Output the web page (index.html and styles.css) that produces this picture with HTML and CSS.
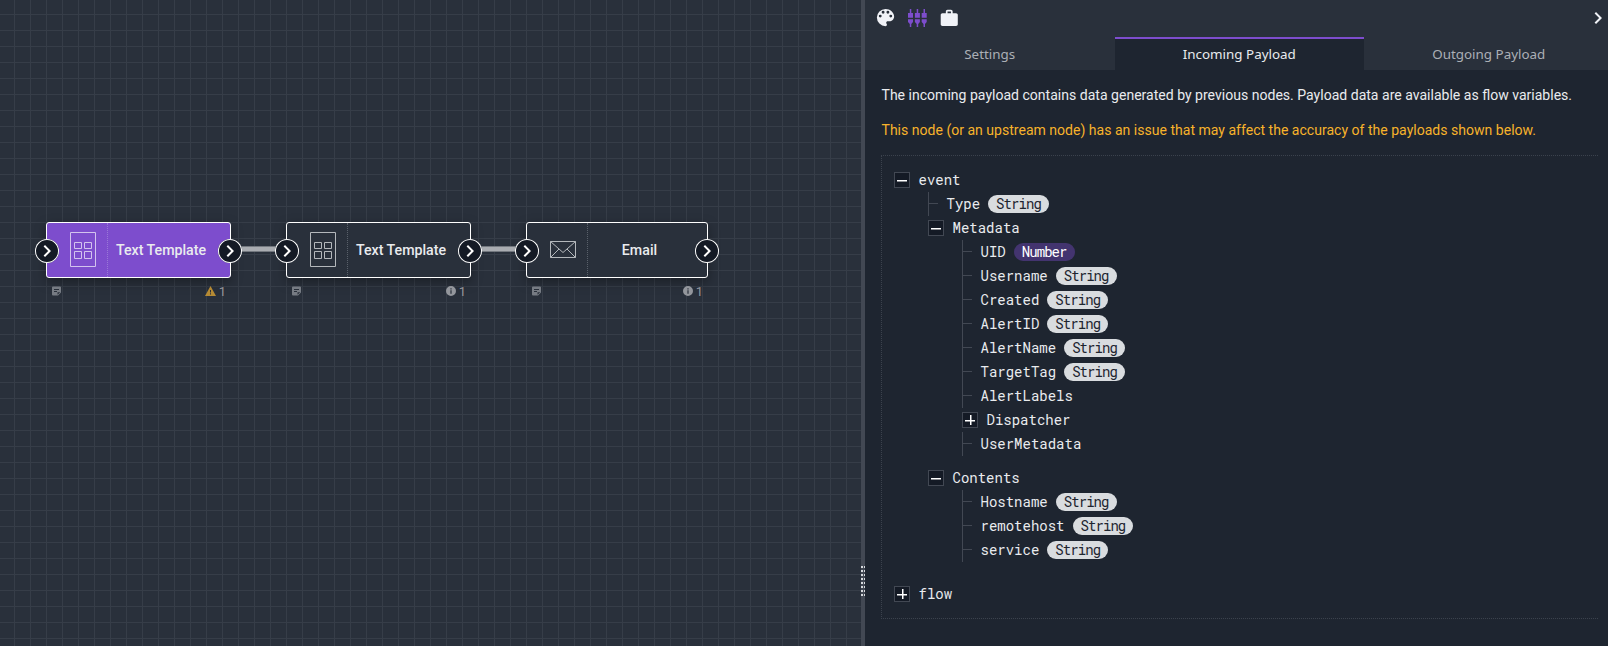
FILE: index.html
```html
<!DOCTYPE html>
<html lang="en">
<head>
<meta charset="utf-8">
<title>Flow editor</title>
<link rel="stylesheet" href="styles.css">
</head>
<body>
<svg class="defs" width="0" height="0">
  <symbol id="chev" viewBox="0 0 24 24"><path fill="currentColor" d="M8.590 16.580L13.170 12 8.590 7.410 10 6l6 6-6 6z"/></symbol>
  <symbol id="template" viewBox="0 0 26 35"><g fill="none" stroke="currentColor"><path d="M.5.5h25v34H.5zM4.500 10.500h7v6h-7zM14.500 10.500h7v6h-7zM4.500 19.500h7v7h-7zM14.500 19.500h7v7h-7z"/></g></symbol>
  <symbol id="mail" viewBox="0 0 26 17"><path d="M.5.5h25v16H.5zM.5.5L13 11.500 25.500.5M.5 16.500L9 8M25.500 16.500L17 8" fill="none" stroke="currentColor"/></symbol>
  <symbol id="note" viewBox="0 0 9 10"><path fill="currentColor" fill-rule="evenodd" d="M1 .5h7a1 1 0 0 1 1 1v5L6 9.500H1a1 1 0 0 1-1-1v-7a1 1 0 0 1 1-1zM2 3v1h5V3zM2 5v1h3V5zM5.500 6.200v2.600L8.200 6.200z"/></symbol>
  <symbol id="warn" viewBox="0 0 11 10"><path fill="currentColor" fill-rule="evenodd" d="M5.500 0L11 10H0zM5 4v2.500h1V4zM5 7.300v1.200h1V7.300z"/></symbol>
  <symbol id="info" viewBox="0 0 10 10"><path fill="currentColor" fill-rule="evenodd" d="M5 0a5 5 0 1 1 0 10A5 5 0 0 1 5 0zM4.400 2.200v1.200h1.200V2.200zM4.400 4.300v3.500h1.200V4.300z"/></symbol>
</svg>
<div class="app">
  <main class="canvas">
    <div class="link link-1"></div>
    <div class="link link-2"></div>
    <section class="node node-1 selected">
      <div class="box"><span class="glyph"><svg width="26" height="35"><use href="#template"/></svg></span><span class="label">Text Template</span></div>
      <span class="port in"><svg width="24" height="24"><use href="#chev"/></svg></span>
      <span class="port out"><svg width="24" height="24"><use href="#chev"/></svg></span>
      <div class="meta"><svg width="9" height="10"><use href="#note"/></svg><span class="count"><svg class="amber" width="11" height="10"><use href="#warn"/></svg>1</span></div>
    </section>
    <section class="node node-2">
      <div class="box"><span class="glyph"><svg width="26" height="35"><use href="#template"/></svg></span><span class="label">Text Template</span></div>
      <span class="port in"><svg width="24" height="24"><use href="#chev"/></svg></span>
      <span class="port out"><svg width="24" height="24"><use href="#chev"/></svg></span>
      <div class="meta"><svg width="9" height="10"><use href="#note"/></svg><span class="count"><svg width="10" height="10"><use href="#info"/></svg>1</span></div>
    </section>
    <section class="node node-3">
      <div class="box"><span class="glyph"><svg width="26" height="17"><use href="#mail"/></svg></span><span class="label">Email</span></div>
      <span class="port in"><svg width="24" height="24"><use href="#chev"/></svg></span>
      <span class="port out"><svg width="24" height="24"><use href="#chev"/></svg></span>
      <div class="meta"><svg width="9" height="10"><use href="#note"/></svg><span class="count"><svg width="10" height="10"><use href="#info"/></svg>1</span></div>
    </section>
  </main>
  <div class="splitter"><i class="grip"></i></div>
  <aside class="panel">
    <header class="toolbar">
      <svg class="palette" width="23" height="23" viewBox="0 0 24 24"><path fill="currentColor" d="M12 3a9 9 0 0 0 0 18c.83 0 1.500-.67 1.500-1.500 0-.39-.15-.74-.39-1.010-.23-.26-.38-.61-.38-.99 0-.83.67-1.500 1.500-1.500H16c2.760 0 5-2.240 5-5 0-4.420-4.030-8-9-8zm-5.500 9a1.500 1.500 0 1 1 0-3 1.500 1.500 0 0 1 0 3zm3-4a1.500 1.500 0 1 1 0-3 1.500 1.500 0 0 1 0 3zm5 0a1.500 1.500 0 1 1 0-3 1.500 1.500 0 0 1 0 3zm3 4a1.500 1.500 0 1 1 0-3 1.500 1.500 0 0 1 0 3z"/></svg>
      <svg class="payload" width="19" height="18" viewBox="0 0 19 18"><path fill="currentColor" d="M1.800 0h1.500v4H5v4.700H0V4h1.800zM8.700 0h1.500v4h1.700v4.700h-5V4h1.800zM15.500 0H17v4h1.700v4.700h-5V4h1.800zM0 10.200h5V13l-1.700 2v3H1.800v-3L0 13zM6.900 10.200h5V13l-1.700 2v3H8.700v-3l-1.800-2zM13.700 10.200h5V13L17 15v3h-1.500v-3l-1.800-2z"/></svg>
      <svg class="kit" width="20.500" height="20.500" viewBox="0 0 24 24"><path fill="currentColor" d="M20 6h-4V4c0-1.110-.89-2-2-2h-4c-1.110 0-2 .89-2 2v2H4c-1.110 0-2 .89-2 2v11c0 1.110.89 2 2 2h16c1.110 0 2-.89 2-2V8c0-1.110-.89-2-2-2zm-6 0h-4V4h4v2z"/></svg>
      <svg class="collapse" width="24" height="24"><use href="#chev"/></svg>
    </header>
    <nav class="tabs"><a class="tab">Settings</a><a class="tab active">Incoming Payload</a><a class="tab">Outgoing Payload</a></nav>
    <div class="body">
      <p class="text">The incoming payload contains data generated by previous nodes. Payload data are available as flow variables.</p>
      <p class="text warning">This node (or an upstream node) has an issue that may affect the accuracy of the payloads shown below.</p>
      <div class="tree">
        <div class="row"><b class="toggle"></b>event</div>
        <div class="branch">
          <div class="row leaf">Type<em class="chip">String</em></div>
          <div class="row"><b class="toggle"></b>Metadata</div>
          <div class="branch">
            <div class="row leaf">UID<em class="chip number">Number</em></div>
            <div class="row leaf">Username<em class="chip">String</em></div>
            <div class="row leaf">Created<em class="chip">String</em></div>
            <div class="row leaf">AlertID<em class="chip">String</em></div>
            <div class="row leaf">AlertName<em class="chip">String</em></div>
            <div class="row leaf">TargetTag<em class="chip">String</em></div>
            <div class="row leaf">AlertLabels</div>
            <div class="row"><b class="toggle plus"></b>Dispatcher</div>
            <div class="row leaf">UserMetadata</div>
          </div>
          <div class="row"><b class="toggle"></b>Contents</div>
          <div class="branch">
            <div class="row leaf">Hostname<em class="chip">String</em></div>
            <div class="row leaf">remotehost<em class="chip">String</em></div>
            <div class="row leaf">service<em class="chip">String</em></div>
          </div>
        </div>
        <div class="row"><b class="toggle plus"></b>flow</div>
      </div>
    </div>
  </aside>
</div>
</body>
</html>
```
FILE: styles.css
```css
* { box-sizing: border-box; }
body { margin: 0; background: #1e2530; color: #e9ebee; font: 14px/24px Roboto, sans-serif; overflow: hidden; }
svg { display: block; flex: none; }
.defs { position: absolute; }
.app { display: flex; height: 646px; width: 1608px; overflow: hidden; }

.canvas {
  position: relative; flex: 0 0 861px; background-color: #29303b;
  background-image: linear-gradient(#363d48 1px, transparent 1px), linear-gradient(90deg, #363d48 1px, transparent 1px);
  background-size: 16px 16px; background-position: 14px 14px;
}
.link { position: absolute; top: 246px; height: 6px; width: 50px; background: #a9acb1; border: solid #73787f; border-width: 1px 0; }
.link-1 { left: 236px; }
.link-2 { left: 476px; }
.node { position: absolute; top: 222px; width: 185px; }
.node-1 { left: 46px; }
.node-2 { left: 286px; }
.node-3 { left: 526px; width: 182px; }
.box { display: flex; height: 56px; border: 1px solid #fff; border-radius: 3px; background: #29303b; box-shadow: 0 4px 12px rgba(0, 0, 0, .35); }
.selected .box { background: #7d4dcd; }
.glyph { display: flex; align-items: center; justify-content: flex-end; width: 61px; padding: 0 11px 2px 0; border-right: 1px dotted #5a616b; color: #b4b8bc; }
.selected .glyph { color: #d3c3ee; border-color: #9a78d8; }
.label { flex: 1; padding-right: 16px; text-align: center; font-size: 14.200px; font-weight: 500; line-height: 55px; }
.port { position: absolute; top: 17px; width: 24px; height: 24px; border-radius: 50%; background: #141a25; box-shadow: inset 0 0 0 1px #fff; color: #fff; }
.in { left: -11px; }
.out { right: -11px; }
.meta { display: flex; justify-content: space-between; padding: 8px 5px 0 6px; height: 18px; color: #767b83; line-height: 11px; }
.count { display: flex; gap: 3px; color: #93969c; font-size: 13px; }
.amber { color: #b58a34; }

.splitter { flex: 0 0 4px; background: #424853; }
.grip { display: block; margin-top: 566px; height: 30px; background: linear-gradient(90deg, transparent 2px, #424853 2px 3px, transparent 3px), repeating-linear-gradient(#d5d8dc 0 2px, #424853 2px 4px); }

.panel { flex: 0 0 748px; }
.toolbar { display: flex; align-items: center; height: 37px; background: #29303b; color: #f0f2f7; }
.palette { margin: 0 0 2px 9px; }
.payload { margin: 0 12px 1px 11px; color: #7d4dcd; }
.kit { margin-bottom: 1px; }
.collapse { margin: 0 4px 1px auto; }
.tabs { display: flex; height: 33px; background: #29303b; font: 13.400px/30px "Noto Sans", sans-serif; }
.tab { flex: 0 0 249.500px; text-align: center; border-top: 2px solid transparent; color: #abafb6; }
.active { background: #1e2530; border-color: #7d4dcd; color: #e9ebee; }
.body { padding: 13px 15px 0 16px; width: 748px; }
.text { margin: 0 0 11px .5px; font-size: 14.050px; white-space: nowrap; }
.warning { color: #f7b32b; margin-bottom: 13px; }
.tree { height: 464px; border: 1px dotted #3b424d; border-right: 0; padding: 12px; font: 14px/24px "Roboto Mono", "Liberation Mono", monospace; }
.row { display: flex; align-items: center; height: 24px; }
.branch { display: flow-root; margin-left: 34px; padding-bottom: 10px; }
.leaf { border-left: 1px solid #424853; }
.leaf::before { content: ""; width: 9px; height: 1px; margin: -1px 8.500px 0 0; background: #424853; }
.toggle { width: 16px; height: 16px; margin-right: 8.500px; border: 1px solid #424853; background: linear-gradient(#fff, #fff) 2px 6.500px / 10px 1.500px no-repeat #141a25; }
.plus { background: linear-gradient(#fff, #fff) 2px 6.500px / 10px 1.500px no-repeat, linear-gradient(#fff, #fff) 6.500px 2px / 1.500px 10px no-repeat #141a25; }
.chip { height: 18px; margin-left: 8px; padding: 0 8px; border-radius: 9px; background: #d9dcdf; color: #1e2530; font-style: normal; line-height: 18px; letter-spacing: -.930px; }
.number { background: #43346f; color: #fff; }
```
